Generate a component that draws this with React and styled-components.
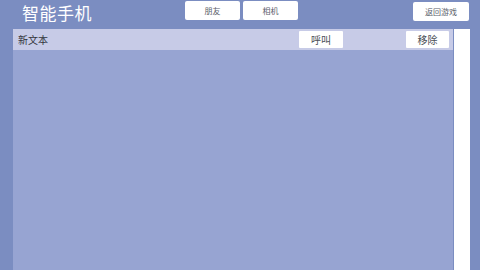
import styled, { createGlobalStyle } from "styled-components";

const GlobalStyle = createGlobalStyle`
  html, body {
    margin: 0;
    padding: 0;
  }
  body {
    font-family: "Noto Sans CJK SC", "Noto Sans", sans-serif;
  }
`;

const Screen = styled.div`
  width: 480px;
  height: 270px;
  background: #7b8dc1;
  display: flex;
  flex-direction: column;
  overflow: hidden;
`;

const TopBar = styled.div`
  height: 29px;
  display: flex;
  align-items: flex-start;
  padding-left: 22px;
  box-sizing: border-box;
`;

const Title = styled.div`
  width: 163px;
  color: #ffffff;
  font-size: 17px;
  line-height: 25px;
  letter-spacing: 0.5px;
`;

const NavButton = styled.button`
  width: ${({ $w }) => $w || 55}px;
  height: 19px;
  margin-top: ${({ $top }) => $top || 1}px;
  margin-right: ${({ $mr }) => $mr || 3}px;
  margin-left: ${({ $push }) => ($push ? "auto" : "0")};
  padding: 0;
  border: none;
  border-radius: 2px;
  background: #ffffff;
  color: #5a606b;
  font-family: inherit;
  font-size: 8px;
  line-height: 19px;
`;

const Main = styled.div`
  flex: 1;
  display: flex;
  padding-left: 13px;
`;

const Panel = styled.div`
  width: 440px;
  background: #97a4d2;
`;

const ScrollBar = styled.div`
  width: 16px;
  margin-left: 1px;
  background: #ffffff;
`;

const Row = styled.div`
  height: 21px;
  background: #c7cbe7;
  display: flex;
  align-items: center;
  padding: 0 4px 0 5px;
`;

const RowLabel = styled.div`
  flex: 1;
  color: #33363d;
  font-size: 10px;
`;

const RowButton = styled.button`
  width: ${({ $w }) => $w}px;
  height: 17px;
  margin-left: ${({ $ml }) => $ml}px;
  padding: 0;
  border: none;
  border-radius: 1px;
  background: #ffffff;
  color: #4a4e56;
  font-family: inherit;
  font-size: 10px;
  line-height: 17px;
`;

export default function App() {
  return (
    <>
      <GlobalStyle />
      <Screen>
        <TopBar>
          <Title>智能手机</Title>
          <NavButton>朋友</NavButton>
          <NavButton>相机</NavButton>
          <NavButton $push $top={2} $w={56} $mr={11}>返回游戏</NavButton>
        </TopBar>
        <Main>
          <Panel>
            <Row>
              <RowLabel>新文本</RowLabel>
              <RowButton $w={44} $ml={0}>呼叫</RowButton>
              <RowButton $w={43} $ml={63}>移除</RowButton>
            </Row>
          </Panel>
          <ScrollBar />
        </Main>
      </Screen>
    </>
  );
}
